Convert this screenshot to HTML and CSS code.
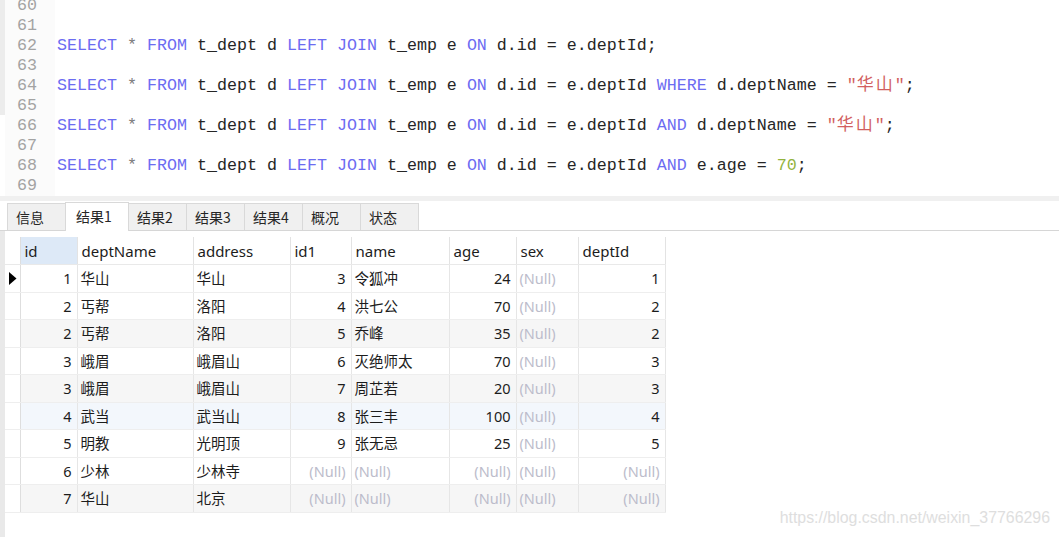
FILE: index.html
```html
<!DOCTYPE html>
<html>
<head>
<meta charset="utf-8">
<link rel="stylesheet" href="styles.css">
</head>
<body>
<div class="editor">
  <div class="strip"></div>
  <div class="gutter">
    <div>60</div><div>61</div><div>62</div><div>63</div><div>64</div>
    <div>65</div><div>66</div><div>67</div><div>68</div><div>69</div>
  </div>
  <div class="code">
    <div class="ln"></div>
    <div class="ln"></div>
    <div class="ln"><span class="kw">SELECT</span> <span class="op">*</span> <span class="kw">FROM</span> t_dept d <span class="kw">LEFT</span> <span class="kw">JOIN</span> t_emp e <span class="kw">ON</span> d.id = e.deptId;</div>
    <div class="ln"></div>
    <div class="ln"><span class="kw">SELECT</span> <span class="op">*</span> <span class="kw">FROM</span> t_dept d <span class="kw">LEFT</span> <span class="kw">JOIN</span> t_emp e <span class="kw">ON</span> d.id = e.deptId <span class="kw">WHERE</span> d.deptName = <span class="str">"<span class="cjk">华山</span>"</span>;</div>
    <div class="ln"></div>
    <div class="ln"><span class="kw">SELECT</span> <span class="op">*</span> <span class="kw">FROM</span> t_dept d <span class="kw">LEFT</span> <span class="kw">JOIN</span> t_emp e <span class="kw">ON</span> d.id = e.deptId <span class="kw">AND</span> d.deptName = <span class="str">"<span class="cjk">华山</span>"</span>;</div>
    <div class="ln"></div>
    <div class="ln"><span class="kw">SELECT</span> <span class="op">*</span> <span class="kw">FROM</span> t_dept d <span class="kw">LEFT</span> <span class="kw">JOIN</span> t_emp e <span class="kw">ON</span> d.id = e.deptId <span class="kw">AND</span> e.age = <span class="num">70</span>;</div>
    <div class="ln"></div>
  </div>
</div>
<div class="splitter"></div>
<div class="tabs">
  <div class="tab">信息</div>
  <div class="tab active">结果1</div>
  <div class="tab">结果2</div>
  <div class="tab">结果3</div>
  <div class="tab">结果4</div>
  <div class="tab">概况</div>
  <div class="tab">状态</div>
</div>
<div class="results">
  <div class="lstrip"></div>
  <table class="grid">
    <colgroup>
      <col class="c-rh"><col class="c-id"><col class="c-dn"><col class="c-ad"><col class="c-id1"><col class="c-nm"><col class="c-age"><col class="c-sex"><col class="c-did">
    </colgroup>
    <thead>
      <tr><th class="rh"></th><th class="sel">id</th><th>deptName</th><th>address</th><th>id1</th><th>name</th><th>age</th><th>sex</th><th>deptId</th></tr>
    </thead>
    <tbody>
      <tr><td class="rh"><svg class="cur" width="8" height="13" viewBox="0 0 8 13"><path d="M0 0 L7.5 6.5 L0 13 Z" fill="#000"/></svg></td><td class="n">1</td><td>华山</td><td>华山</td><td class="n">3</td><td>令狐冲</td><td class="n">24</td><td class="null">(Null)</td><td class="n">1</td></tr>
      <tr><td class="rh"></td><td class="n">2</td><td>丐帮</td><td>洛阳</td><td class="n">4</td><td>洪七公</td><td class="n">70</td><td class="null">(Null)</td><td class="n">2</td></tr>
      <tr class="alt"><td class="rh"></td><td class="n">2</td><td>丐帮</td><td>洛阳</td><td class="n">5</td><td>乔峰</td><td class="n">35</td><td class="null">(Null)</td><td class="n">2</td></tr>
      <tr><td class="rh"></td><td class="n">3</td><td>峨眉</td><td>峨眉山</td><td class="n">6</td><td>灭绝师太</td><td class="n">70</td><td class="null">(Null)</td><td class="n">3</td></tr>
      <tr class="alt"><td class="rh"></td><td class="n">3</td><td>峨眉</td><td>峨眉山</td><td class="n">7</td><td>周芷若</td><td class="n">20</td><td class="null">(Null)</td><td class="n">3</td></tr>
      <tr class="hover"><td class="rh"></td><td class="n">4</td><td>武当</td><td>武当山</td><td class="n">8</td><td>张三丰</td><td class="n">100</td><td class="null">(Null)</td><td class="n">4</td></tr>
      <tr><td class="rh"></td><td class="n">5</td><td>明教</td><td>光明顶</td><td class="n">9</td><td>张无忌</td><td class="n">25</td><td class="null">(Null)</td><td class="n">5</td></tr>
      <tr><td class="rh"></td><td class="n">6</td><td>少林</td><td>少林寺</td><td class="n null">(Null)</td><td class="null">(Null)</td><td class="n null">(Null)</td><td class="null">(Null)</td><td class="n null">(Null)</td></tr>
      <tr class="alt"><td class="rh"></td><td class="n">7</td><td>华山</td><td>北京</td><td class="n null">(Null)</td><td class="null">(Null)</td><td class="n null">(Null)</td><td class="null">(Null)</td><td class="n null">(Null)</td></tr>
    </tbody>
  </table>
</div>
<div class="watermark">https://blog.csdn.net/weixin_37766296</div>
</body>
</html>
```

FILE: styles.css
```css
html, body {
  margin: 0;
  padding: 0;
  background: #fff;
  width: 1059px;
  height: 537px;
  overflow: hidden;
}
body {
  position: relative;
}

/* ---------- editor ---------- */
.editor {
  height: 196px;
  overflow: hidden;
  display: flex;
  align-items: flex-start;
  font-family: "Liberation Mono", "Noto Sans CJK SC", monospace;
  font-size: 16.67px;
  line-height: 20px;
}
.strip {
  width: 5px;
  height: 115px;
  background: #ececec;
  flex: none;
}
.gutter {
  width: 32px;
  padding-right: 18px;
  text-align: right;
  color: #a3a3a3;
  background: #fbfbfb;
  margin-top: -4px;
  flex: none;
}
.code {
  padding-left: 2px;
  margin-top: -4px;
  color: #262626;
}
.ln {
  height: 20px;
  white-space: pre;
}
.kw { color: #6c6cf2; }
.op { color: #7a7a7a; }
.str { color: #d25f5f; }
.num { color: #93b33e; }
.cjk {
  font-family: "Noto Sans CJK SC", sans-serif;
  font-size: 17px;
  line-height: 1px;
  letter-spacing: 2px;
}

.splitter {
  height: 5px;
  background: #f0f0f0;
}

/* ---------- tabs ---------- */
.tabs {
  height: 29px;
  border-bottom: 1px solid #d6d6d6;
  padding-left: 7px;
  display: flex;
  align-items: flex-end;
  font-family: "Noto Sans CJK SC", sans-serif;
  font-size: 14px;
  color: #262626;
}
.tab {
  box-sizing: border-box;
  width: 59px;
  height: 27px;
  line-height: 26px;
  padding-left: 8px;
  background: #f0f0f0;
  border: 1px solid #d9d9d9;
  border-bottom: none;
  margin-right: -1px;
}
.tab.active {
  width: 64px;
  height: 29px;
  margin-bottom: -1px;
  background: #fff;
  padding-left: 10px;
  line-height: 27px;
  position: relative;
  z-index: 1;
}

/* ---------- grid ---------- */
.results {
  display: flex;
  height: 306px;
}
.lstrip {
  width: 5px;
  background: #e9e9e9;
  flex: none;
}
.grid {
  margin-top: 6px;
  align-self: flex-start;
  border-collapse: collapse;
  table-layout: fixed;
  width: 660px;
  font-family: "Noto Sans", "Noto Sans CJK SC", sans-serif;
  font-size: 14.5px;
  color: #1c1c1c;
}
.c-rh { width: 15px; }
.c-id { width: 57px; }
.c-dn { width: 116px; }
.c-ad { width: 97px; }
.c-id1 { width: 61px; }
.c-nm { width: 98px; }
.c-age { width: 67px; }
.c-sex { width: 62px; }
.c-did { width: 87px; }

.grid th {
  height: 27px;
  padding: 0 4px;
  text-align: left;
  font-weight: normal;
  font-size: 15px;
  line-height: 20px;
  background: #fff;
  border-right: 1px solid #e3e3e3;
  border-bottom: 1px solid #e9e9e9;
  white-space: nowrap;
}
.grid th.sel {
  background: #dde9f7;
}
.grid td {
  height: 26.5px;
  padding: 0 5px 0 3px;
  border-right: 1px solid #e6e6e6;
  border-bottom: 1px solid #eeeeee;
  white-space: nowrap;
  line-height: 20px;
}
.grid td.n { text-align: right; }
.grid td.null { color: #bcbccb; }
.grid .rh {
  padding: 0;
  background: #fff;
  border-right: 1px solid #dedede;
  text-align: left;
}
.cur {
  display: block;
  margin-left: 4px;
}
.grid tr.alt td { background: #f6f6f6; }
.grid tr.hover td { background: #f3f7fc; }
.grid tr td.rh { background: #fff; }

/* ---------- watermark ---------- */
.watermark {
  position: absolute;
  right: 9px;
  top: 509px;
  font-family: "Liberation Sans", Arial, sans-serif;
  font-size: 15.9px;
  line-height: 18px;
  color: #dedede;
}
```
